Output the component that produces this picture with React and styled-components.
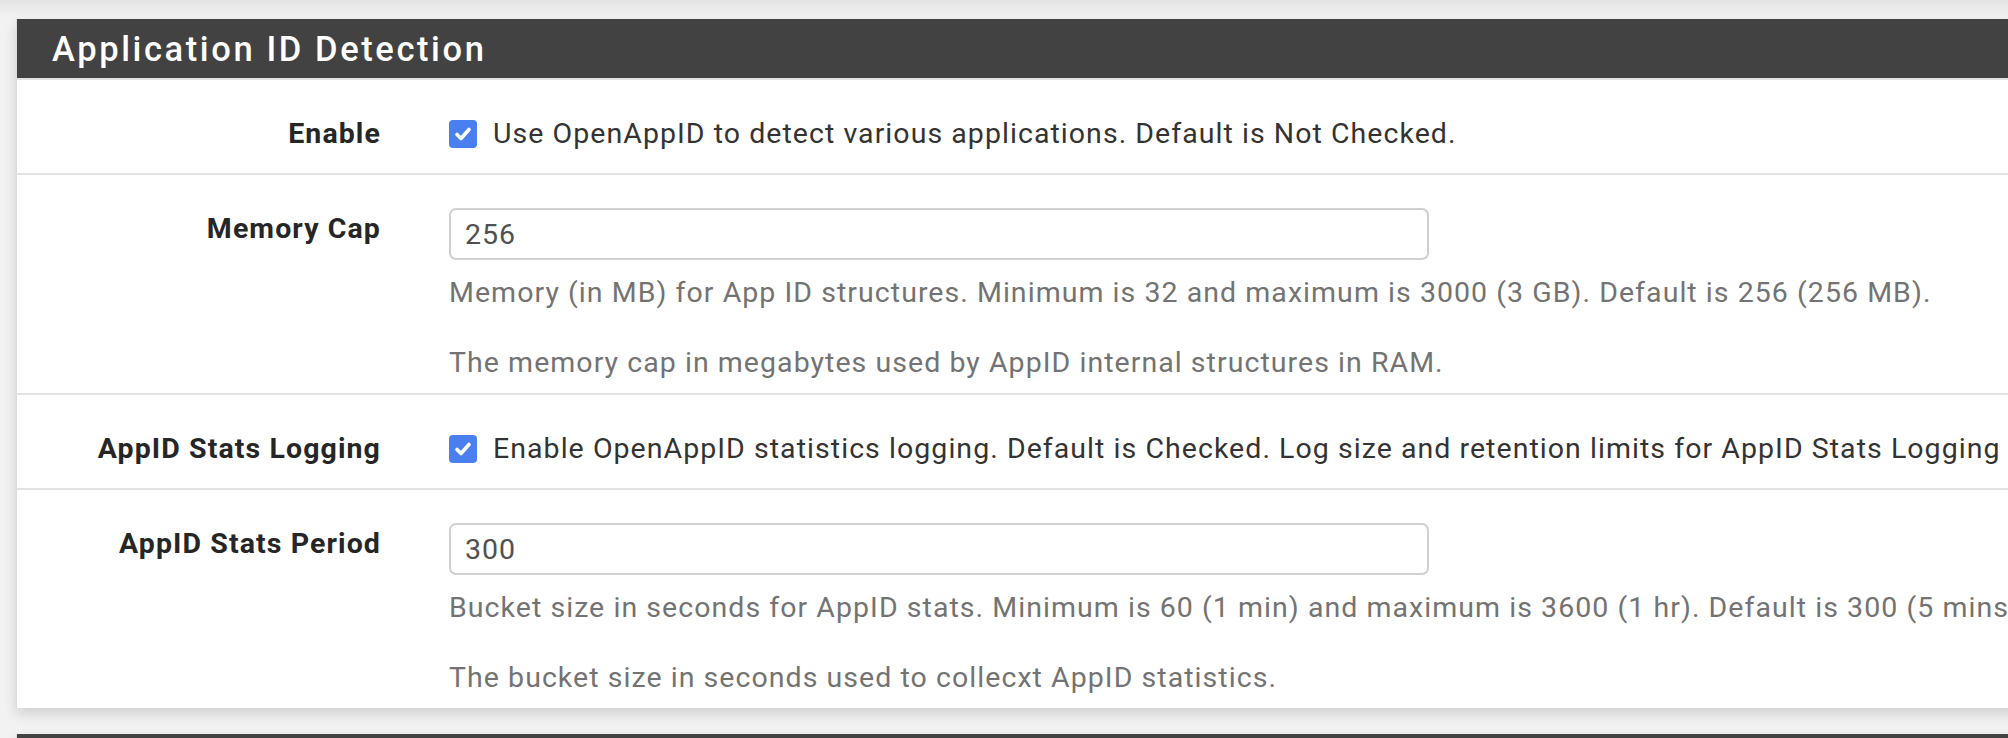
import styled, { createGlobalStyle } from "styled-components";

const GlobalStyle = createGlobalStyle`
  html, body {
    margin: 0;
    padding: 0;
    background: #f2f2f2;
    overflow: hidden;
  }
  * {
    box-sizing: border-box;
  }
`;

const Page = styled.div`
  width: 2008px;
  height: 738px;
  overflow: hidden;
  padding: 19px 0 0 16px;
  background: linear-gradient(#e3e3e3, #f2f2f2 17px);
  font-family: Roboto, "Liberation Sans", sans-serif;
  display: flex;
  flex-direction: column;
  gap: 26px;
`;

const Panel = styled.section`
  width: 2200px;
  flex-shrink: 0;
  background: #fff;
  border-left: 1px solid #dcdcdc;
  box-shadow: 0 6px 12px rgba(0, 0, 0, 0.14);
`;

const Heading = styled.header`
  height: 61px;
  background: #424242;
  border-bottom: 2px solid #e2e2e2;
  display: flex;
  align-items: center;
  padding-left: 35px;
`;

const Title = styled.h2`
  margin: 0;
  color: #fff;
  font-size: 34.5px;
  font-weight: 500;
  letter-spacing: 2.6px;
`;

const Row = styled.div`
  display: grid;
  grid-template-columns: 364px 1fr;
  column-gap: 68px;
  padding: 33px 0 ${(p) => (p.$tall ? "10px" : "19px")};
  border-bottom: ${(p) => (p.$last ? "none" : "2px solid #e2e2e2")};
`;

const Label = styled.div`
  text-align: right;
  font-size: 28.5px;
  font-weight: 700;
  letter-spacing: 1.1px;
  line-height: 40px;
  padding-top: 1px;
  color: #262626;
`;

const Control = styled.div`
  display: flex;
  flex-direction: column;
  min-width: 0;
`;

const CheckLine = styled.label`
  display: flex;
  align-items: center;
  gap: 16px;
  padding-top: 1px;
  line-height: 40px;
  font-size: 28.5px;
  letter-spacing: 1.05px;
  color: #333;
  white-space: nowrap;
`;

const Box = styled.span`
  width: 28px;
  height: 28px;
  border-radius: 4px;
  background: #4a7ff0;
  display: inline-flex;
  align-items: center;
  justify-content: center;
  flex-shrink: 0;
`;

const Input = styled.input`
  width: 980px;
  height: 52px;
  border: 2px solid #d0d0d0;
  border-radius: 7px;
  padding: 0 14px;
  font-family: inherit;
  font-size: 28.5px;
  letter-spacing: 1px;
  color: #505050;
  outline: none;
`;

const Help = styled.p`
  margin: ${(p) => (p.$first ? "13px" : "30px")} 0 0;
  font-size: 28.5px;
  letter-spacing: 1.05px;
  line-height: 40px;
  color: #737373;
  white-space: nowrap;
`;

const Check = () => (
  <Box>
    <svg width="20" height="20" viewBox="0 0 20 20" fill="none">
      <path
        d="M4 10.5l4 4 8-9"
        stroke="#fff"
        strokeWidth="3.6"
        strokeLinecap="round"
        strokeLinejoin="round"
      />
    </svg>
  </Box>
);

const rows = [
  {
    label: "Enable",
    kind: "check",
    text: "Use OpenAppID to detect various applications. Default is Not Checked.",
  },
  {
    label: "Memory Cap",
    kind: "input",
    value: "256",
    help: [
      "Memory (in MB) for App ID structures. Minimum is 32 and maximum is 3000 (3 GB). Default is 256 (256 MB).",
      "The memory cap in megabytes used by AppID internal structures in RAM.",
    ],
  },
  {
    label: "AppID Stats Logging",
    kind: "check",
    text: "Enable OpenAppID statistics logging. Default is Checked. Log size and retention limits for AppID Stats Logging can be set on the LOGS MGMT tab.",
  },
  {
    label: "AppID Stats Period",
    kind: "input",
    value: "300",
    help: [
      "Bucket size in seconds for AppID stats. Minimum is 60 (1 min) and maximum is 3600 (1 hr). Default is 300 (5 mins).",
      "The bucket size in seconds used to collecxt AppID statistics.",
    ],
  },
];

export default function App() {
  return (
    <>
      <GlobalStyle />
      <Page>
        <Panel>
          <Heading>
            <Title>Application ID Detection</Title>
          </Heading>
          {rows.map((r, i) => (
            <Row key={r.label} $tall={r.kind === "input"} $last={i === rows.length - 1}>
              <Label>{r.label}</Label>
              <Control>
                {r.kind === "check" ? (
                  <CheckLine>
                    <Check />
                    {r.text}
                  </CheckLine>
                ) : (
                  <>
                    <Input defaultValue={r.value} />
                    {r.help.map((h, j) => (
                      <Help key={j} $first={j === 0}>
                        {h}
                      </Help>
                    ))}
                  </>
                )}
              </Control>
            </Row>
          ))}
        </Panel>
        <Panel>
          <Heading />
        </Panel>
      </Page>
    </>
  );
}
